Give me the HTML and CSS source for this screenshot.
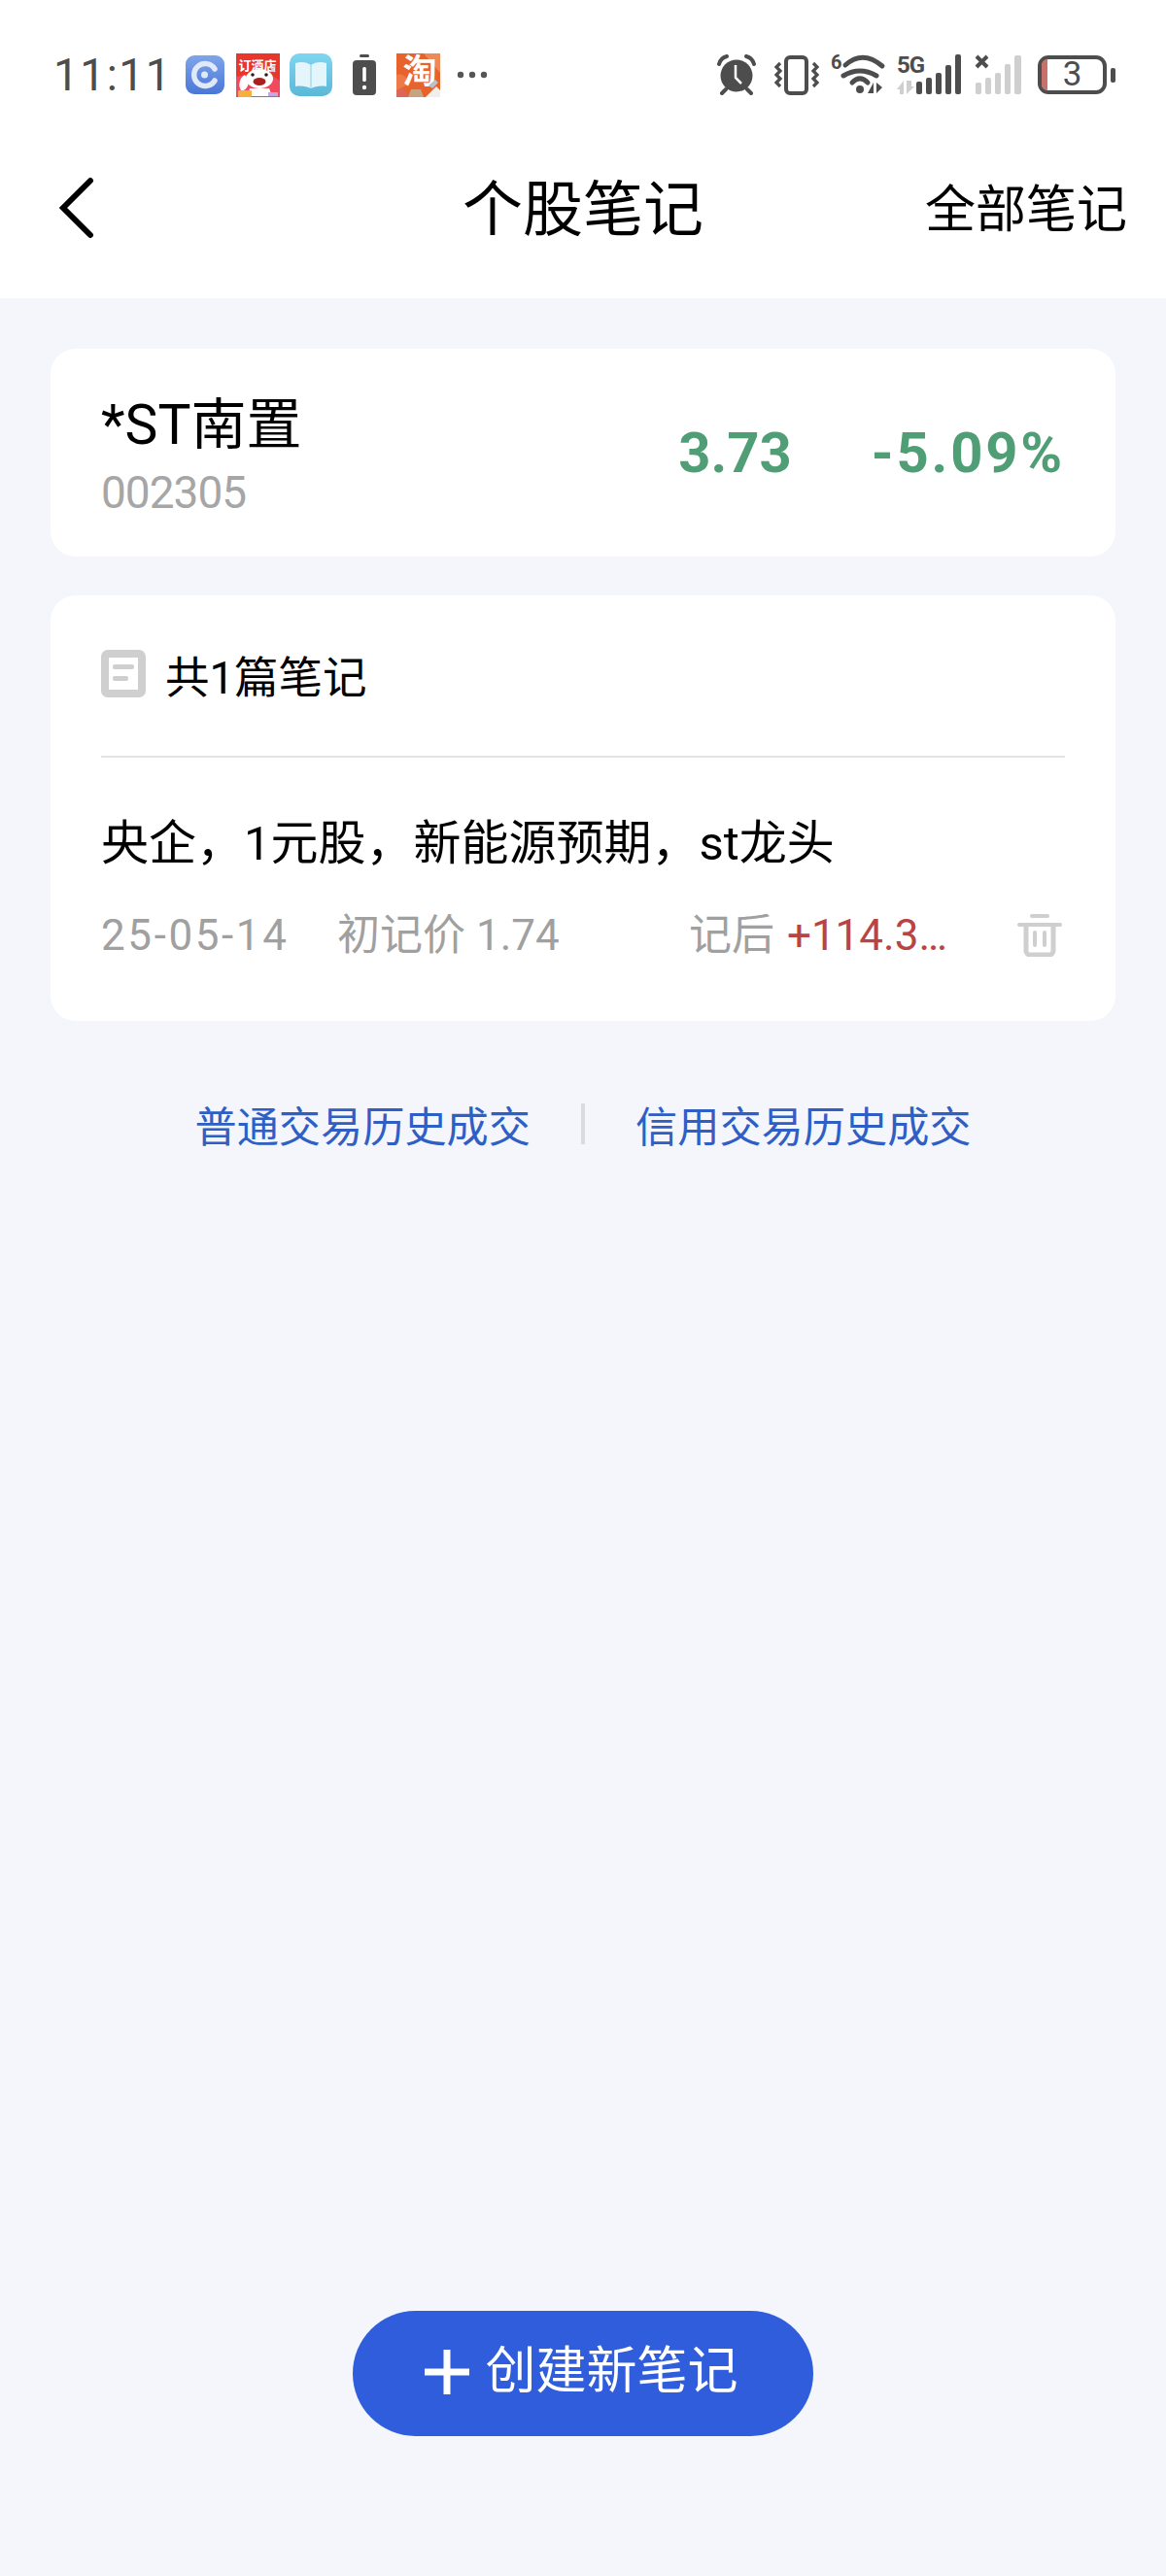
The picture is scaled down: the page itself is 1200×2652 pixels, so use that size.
FILE: index.html
```html
<!DOCTYPE html>
<html lang="zh-CN">
<head>
<meta charset="utf-8">
<title>个股笔记</title>
<link rel="stylesheet" href="styles.css">
</head>
<body>
<div class="page">
  <header class="top">
    <div class="status">
      <div class="status-left">
        <span class="time">11:11</span>
        <svg class="ni-c" viewBox="0 0 40 40"><defs><linearGradient id="cg" x1="0" y1="0" x2="0" y2="1"><stop offset="0" stop-color="#7ea5ea"/><stop offset="1" stop-color="#4a76d6"/></linearGradient></defs><rect width="40" height="40" rx="9" fill="url(#cg)"/><path d="M30 14a11.500 11.500 0 1 0 0 12" fill="none" stroke="#dfe9fa" stroke-width="5.500" stroke-linecap="round"/><circle cx="19.500" cy="20" r="3.500" fill="#dfe9fa"/></svg>
        <svg class="ni-jd" viewBox="0 0 45 45"><rect width="45" height="45" fill="#e8362a"/><text x="22" y="17" class="jd-text">订酒店</text><path d="M0 45V24l10-2h26l9 6v17z" fill="#ef4a5e"/><ellipse cx="24" cy="26" rx="14" ry="10" fill="#fff"/><path d="M9 22c-6 3-7 12-4 16 4 1 7-3 8-8z" fill="#fff"/><path d="M14 36h20l3 8H12z" fill="#fff"/><ellipse cx="24" cy="29" rx="6.500" ry="4" fill="#a9201f"/><circle cx="17" cy="22" r="1.800" fill="#222"/><circle cx="31" cy="22" r="1.800" fill="#222"/><rect x="2" y="38" width="14" height="7" rx="1" fill="#f3b03c"/><rect x="33" y="40" width="10" height="4" fill="#c7a6e6"/><path d="M35 14l5 5M40 14l-5 5" stroke="#c9d3ee" stroke-width="1.500"/></svg>
        <svg class="ni-book" viewBox="0 0 44 44"><defs><linearGradient id="bg" x1="0" y1="0" x2="0" y2="1"><stop offset="0" stop-color="#7fd6f0"/><stop offset="1" stop-color="#5ab8d8"/></linearGradient></defs><rect width="44" height="44" rx="10" fill="url(#bg)"/><path d="M6 10c6-2 12-1 16 2 4-3 10-4 16-2v24c-6-1-12 0-16 2-4-2-10-3-16-2z" fill="#e4f5fb"/><path d="M22 12v24" stroke="#b5e2f0" stroke-width="2"/></svg>
        <svg class="ni-batt" viewBox="0 0 24 42"><rect x="7" y="0" width="10" height="3" rx="1.500" fill="#4d4d4d"/><rect y="6" width="24" height="36" rx="4" fill="#4d4d4d"/><rect x="10.200" y="13" width="3.600" height="15" rx="1.500" fill="#fff"/><circle cx="12" cy="34" r="2.200" fill="#fff"/></svg>
        <svg class="ni-tao" viewBox="0 0 45 45"><rect width="45" height="45" fill="#e8622c"/><path d="M28 0h17v20z" fill="#ee8a58"/><path d="M0 22c8-2 12 4 12 10L0 38z" fill="#ee7a48"/><text x="24" y="31" class="tao">淘</text><path d="M0 45v-7l7-2 6 9z" fill="#d9685a"/><path d="M12 45l3-8h10l3 8z" fill="#c9a282"/><path d="M30 45l11-11 4 4v7z" fill="#f1efe9"/><path d="M33 33l7-6 3 3-6 6z" fill="#b9c2cc"/></svg>
        <svg class="ni-dots" viewBox="0 0 32 8"><circle cx="4" cy="4" r="3.200" fill="#555"/><circle cx="16" cy="4" r="3.200" fill="#555"/><circle cx="28" cy="4" r="3.200" fill="#555"/></svg>
      </div>
      <div class="status-right">
        <svg class="si-alarm" viewBox="0 0 40 42"><circle cx="20" cy="22" r="16.500" fill="#4d4d4d"/><path d="M2 10C3 6 6 3 10 2M38 10c-1-4-4-7-8-8" fill="none" stroke="#4d4d4d" stroke-width="4" stroke-linecap="round"/><path d="M9 36l-4 4M31 36l4 4" stroke="#4d4d4d" stroke-width="4" stroke-linecap="round"/><path d="M19 11v13l6 6" fill="none" stroke="#fff" stroke-width="2.500"/></svg>
        <svg class="si-vib" viewBox="0 0 46 42"><rect x="12" y="3" width="21" height="37" rx="4" fill="none" stroke="#4d4d4d" stroke-width="4"/><path d="M6 9 2 13l4 4-4 4 4 4-4 4 4 4M40 9l4 4-4 4 4 4-4 4 4 4-4 4" fill="none" stroke="#4d4d4d" stroke-width="3.200"/></svg>
        <svg class="si-wifi" viewBox="0 0 58 42"><text x="0" y="15" class="six">6</text><path d="M15 11Q33-5 53 12M13 22Q30 12 47 22M22 29q8-8 16 0" fill="none" stroke="#4d4d4d" stroke-width="5" stroke-linecap="round"/><circle cx="30" cy="36" r="4" fill="#4d4d4d"/><path d="M44 40V29l-6 11zM47 29v11l6-6z" fill="#4d4d4d"/></svg>
        <svg class="si-5g" viewBox="0 0 68 42"><text x="2" y="19" class="fiveg">5G</text><path d="M9 41V27L2 36h3v5zM12 27v14l8-8h-3v-6z" fill="#cfcfcf"/><g fill="#4d4d4d"><rect x="22" y="28" width="6" height="13" rx="2"/><rect x="32" y="24" width="6" height="17" rx="2"/><rect x="42" y="19" width="6" height="22" rx="2"/><rect x="52" y="11" width="6" height="30" rx="2"/><rect x="62" y="0" width="6" height="41" rx="2"/></g></svg>
        <svg class="si-sim" viewBox="0 0 48 42"><path d="M2 2l11 11M13 2 2 13" stroke="#4d4d4d" stroke-width="4"/><g fill="#cfcfcf"><rect x="1" y="29" width="6" height="12" rx="2"/><rect x="11" y="24" width="6" height="17" rx="2"/><rect x="21" y="19" width="6" height="22" rx="2"/><rect x="31" y="10" width="6" height="31" rx="2"/><rect x="41" y="1" width="7" height="40" rx="2"/></g></svg>
        <div class="battery">
          <div class="cell"><span class="level"></span><span class="num">3</span></div>
          <span class="nub"></span>
        </div>
      </div>
    </div>
    <nav class="navbar">
      <svg class="back" viewBox="0 0 40 64"><path d="M33 4 5 32l28 28" fill="none" stroke="#000" stroke-width="6" stroke-linecap="round"/></svg>
      <h1 class="title">个股笔记</h1>
      <a class="all">全部笔记</a>
    </nav>
  </header>

  <main class="content">
    <section class="card stock">
      <div class="stock-id">
        <div class="stock-name">*ST南置</div>
        <div class="stock-code">002305</div>
      </div>
      <div class="stock-nums">
        <span>3.73</span>
        <span class="pct">-5.09%</span>
      </div>
    </section>

    <section class="card notes">
      <div class="notes-head">
        <svg class="doc" viewBox="0 0 46 49"><rect x="4" y="4" width="38" height="41" rx="3" fill="none" stroke="#cfcfcf" stroke-width="8"/><rect x="12" y="15" width="22" height="5" rx="2" fill="#cfcfcf"/><rect x="12" y="27" width="16" height="5" rx="2" fill="#cfcfcf"/></svg>
        <span>共1篇笔记</span>
      </div>
      <div class="note">
        <p class="note-text">央企，1元股，新能源预期，st龙头</p>
        <div class="note-meta">
          <span class="date">25-05-14</span>
          <span class="price">初记价 1.74</span>
          <span class="after">记后 <em>+114.3…</em></span>
          <svg class="trash" viewBox="0 0 46 44"><path d="M15 2h16" stroke="#cfcfcf" stroke-width="4" stroke-linecap="round"/><path d="M2 11h42" stroke="#cfcfcf" stroke-width="4" stroke-linecap="round"/><path d="M9 12v26a4 4 0 0 0 4 4h20a4 4 0 0 0 4-4V12" fill="none" stroke="#cfcfcf" stroke-width="5"/><path d="M18 19v13M28 19v13" stroke="#cfcfcf" stroke-width="4" stroke-linecap="round"/></svg>
        </div>
      </div>
    </section>

    <div class="links">
      <a>普通交易历史成交</a>
      <span class="sep"></span>
      <a>信用交易历史成交</a>
    </div>

    <button class="create">
      <svg class="plus" viewBox="0 0 46 46"><path d="M23 0v46M0 23h46" stroke="#fff" stroke-width="7"/></svg>
      <span class="create-label">创建新笔记</span>
    </button>
  </main>
</div>
</body>
</html>
```
FILE: styles.css
```css
* { box-sizing: border-box; }
html, body { margin: 0; padding: 0; }
body {
  width: 1200px;
  font-family: "Roboto", "Noto Sans CJK SC", sans-serif;
  background: #f4f6fc;
  color: #000;
}
.page { min-height: 2652px; display: flex; flex-direction: column; }
.top { background: #fff; height: 307px; flex: none; }
.status {
  height: 150px;
  padding: 55px 52px 0 55px;
  display: flex;
  justify-content: space-between;
  align-items: flex-start;
}
.status-left, .status-right { display: flex; align-items: center; height: 44px; }
.time { font-size: 46px; color: #4d4d4d; line-height: 44px; letter-spacing: 1.500px; width: 136px; flex: none; }
.ni-c { width: 40px; height: 40px; margin-right: 12px; flex: none; }
.ni-jd { width: 45px; height: 45px; margin-right: 10px; flex: none; overflow: visible; }
.ni-book { width: 44px; height: 44px; margin-right: 21px; flex: none; }
.ni-batt { width: 24px; height: 42px; margin-right: 21px; flex: none; }
.ni-tao { width: 45px; height: 45px; margin-right: 17px; flex: none; overflow: visible; }
.ni-dots { width: 32px; height: 8px; flex: none; }
.jd-text { font-size: 13px; fill: #fff; text-anchor: middle; font-family: "Noto Sans CJK SC", sans-serif; font-weight: 700; }
.tao { font-size: 35px; fill: #fff; text-anchor: middle; font-family: "Noto Sans CJK SC", sans-serif; font-weight: 700; }
.six { font-size: 20px; font-weight: 700; fill: #4d4d4d; font-family: "Roboto", sans-serif; }
.fiveg { font-size: 24px; font-weight: 700; fill: #4d4d4d; font-family: "Roboto", sans-serif; letter-spacing: -1px; }
.si-alarm { width: 40px; height: 42px; margin-right: 19px; flex: none; }
.si-vib { width: 46px; height: 42px; margin-right: 12px; flex: none; }
.si-wifi { width: 58px; height: 42px; margin-right: 8px; flex: none; overflow: visible; }
.si-5g { width: 68px; height: 42px; margin-right: 14px; flex: none; overflow: visible; }
.si-sim { width: 48px; height: 42px; margin-right: 17px; flex: none; }
.battery { display: flex; align-items: center; }
.cell {
  width: 71px; height: 40px;
  border: 4px solid #4d4d4d;
  border-radius: 11px;
  display: flex;
  align-items: center;
  justify-content: center;
  position: relative;
  background: #fff;
}
.level { position: absolute; left: 0; top: 0; bottom: 0; width: 6px; background: #c8706c; border-radius: 6px 0 0 6px; }
.num { font-size: 35px; line-height: 32px; color: #4d4d4d; }
.nub { width: 5px; height: 15px; background: #4d4d4d; border-radius: 2px; margin-left: 4px; }

.navbar {
  height: 127px;
  padding: 0 40px 0 60px;
  display: flex;
  align-items: flex-start;
  position: relative;
}
.back { width: 40px; height: 64px; margin-top: 32px; flex: none; }
.title {
  position: absolute;
  left: 0; right: 0; top: 25px;
  margin: 0;
  text-align: center;
  font-size: 62px;
  line-height: 84px;
  font-weight: 400;
}
.all { margin-left: auto; font-size: 52px; line-height: 72px; margin-top: 31px; }

.content { flex: 1; display: flex; flex-direction: column; padding: 52px 52px 144px; }
.card { background: #fff; border-radius: 26px; }
.stock {
  height: 214px;
  padding: 0 52px;
  display: flex;
  justify-content: space-between;
  align-items: center;
}
.stock-id { padding-top: 10px; }
.stock-name { font-size: 57px; line-height: 72px; }
.stock-code { font-size: 46px; line-height: 66px; color: #a6a6a6; letter-spacing: -1px; }
.stock-nums { display: flex; gap: 82px; font-size: 58px; font-weight: 700; color: #4f9e75; }
.pct { letter-spacing: 2.800px; }

.notes { margin-top: 40px; height: 438px; padding: 0 52px; }
.notes-head {
  height: 167px;
  border-bottom: 2px solid #e3e3e3;
  display: flex;
  align-items: center;
  font-size: 45.500px;
  padding-bottom: 4px;
}
.doc { width: 46px; height: 49px; margin-right: 20px; flex: none; }
.note-text { margin: 0; padding-top: 54px; font-size: 49px; line-height: 70px; }
.note-meta {
  display: flex;
  align-items: center;
  margin-top: 29px;
  font-size: 44px;
  line-height: 60px;
  color: #a0a0a0;
}
.date { width: 243px; letter-spacing: 2.600px; }
.price { width: 362px; }
.after { width: 290px; }
.after em { font-style: normal; color: #b84444; margin-left: 2px; }
.trash { width: 46px; height: 44px; margin: 0 3px 0 auto; flex: none; }

.links {
  margin-top: 70px;
  height: 72px;
  display: flex;
  justify-content: center;
  align-items: center;
  font-size: 43.200px;
  color: #2f5fc4;
}
.sep { width: 4px; height: 42px; background: #dadbe0; margin: 0 52px; }

.create {
  margin: auto auto 0;
  width: 474px;
  height: 129px;
  border: 0;
  border-radius: 65px;
  background: #2f5ddb;
  color: #fff;
  font-family: inherit;
  font-size: 52px;
  display: flex;
  align-items: center;
  justify-content: center;
  gap: 16px;
  padding: 0 3px 4px 0;
}
.plus { width: 46px; height: 46px; flex: none; }
.create-label { line-height: 72px; }
```
